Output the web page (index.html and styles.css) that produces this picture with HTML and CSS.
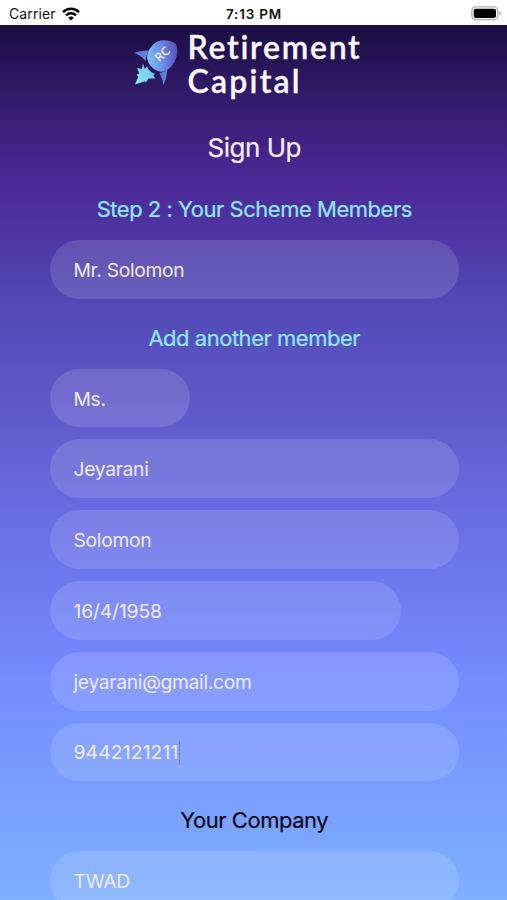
FILE: index.html
```html
<!DOCTYPE html>
<html lang="en">
<head>
<meta charset="utf-8">
<title>Retirement Capital - Sign Up</title>
<link rel="stylesheet" href="styles.css">
</head>
<body>
<div class="phone">
  <header class="status">
    <div class="carrier"><span>Carrier</span>
      <svg class="wifi" width="18" height="14" viewBox="0 0 18 14" fill="none" stroke="#000" stroke-width="2.4"><path d="M1 5.1C5.4.6 12.6.6 17 5.1"/><path d="M4 8.3c2.8-2.8 7.2-2.8 10 0"/><path d="M9 13.6 6.1 10.7c1.6-1.5 4.2-1.5 5.8 0z" fill="#000" stroke="none"/></svg>
    </div>
    <span class="time">7:13 PM</span>
    <svg class="battery" width="31" height="15" viewBox="0 0 31 15"><rect x=".8" y=".8" width="26" height="12.9" rx="4" fill="#fff" stroke="#b0b0b0" stroke-width="1.3"/><rect x="2.7" y="2.7" width="22.3" height="9.2" rx="2.2"/><path d="M28.4 5c2.4.8 2.4 3.7 0 4.5z" fill="#aaa"/></svg>
  </header>
  <main class="page">
    <div class="logo">
      <svg class="rocket" width="50" height="50" viewBox="0 0 50 50">
        <defs>
          <linearGradient id="hull" x1="0" y1="0.6" x2="1" y2="0.4"><stop offset="0" stop-color="#7cc4f4"/><stop offset=".45" stop-color="#6b8fe8"/><stop offset="1" stop-color="#5952bd"/></linearGradient>
          <linearGradient id="fin" x1="0" y1="0" x2="1" y2="1"><stop offset="0" stop-color="#5078cc"/><stop offset="1" stop-color="#6d8ce6"/></linearGradient>
          <linearGradient id="flame" x1="1" y1="0" x2="0" y2="1"><stop offset="0" stop-color="#70b9ec"/><stop offset="1" stop-color="#83f2f2"/></linearGradient>
        </defs>
        <path d="M1.500 12Q9 9 17 9.500C15 12.500 14 16 13.800 20Q9 14 1.500 12z" fill="url(#fin)"/>
        <path d="M27.400 32Q32 31.200 35.500 28.500Q34.800 37 31.500 44Q30.500 37 27.400 32z" fill="url(#fin)"/>
        <path d="M15 16.500C15.500 8 21.500 .8 29-.6c5-.6 10.500 .4 14.500 3.200C46.300 7 45.500 15 42.500 21c-3.500 6-7.800 9-13.500 9.800C22 30 16.500 24.500 15 16.500z" fill="url(#hull)"/>
        <path d="M11 22.300 9.800 28.200 5 26.800 7.300 32.600 4.600 33.600 6.200 36 3 43.500 13 40.200 13.800 41.800 16.500 37.600 23.500 37.600 21.200 34.800 23 33C19 31.500 16.500 29 15 25.500L12.600 28z" fill="url(#flame)"/>
        <text class="initials" transform="translate(27.600 21.400) rotate(-43)">RC</text>
      </svg>
      <div class="brand"><span class="brand-top">Retirement</span><span class="brand-bottom">Capital</span></div>
    </div>
    <h1>Sign Up</h1>
    <h2 class="step">Step 2 : Your Scheme Members</h2>
    <div class="field">Mr. Solomon</div>
    <h2 class="add">Add another member</h2>
    <form class="fields">
      <div class="field short">Ms.</div>
      <div class="field">Jeyarani</div>
      <div class="field">Solomon</div>
      <div class="field date">16/4/1958</div>
      <div class="field email">jeyarani@gmail.com</div>
      <div class="field phone-number">9442121211<i class="caret"></i></div>
    </form>
    <h2 class="company">Your Company</h2>
    <div class="field">TWAD</div>
  </main>
</div>
</body>
</html>
```
FILE: styles.css
```css
* { box-sizing: border-box; }
body { margin: 0; font-family: Inter, "Liberation Sans", sans-serif; overflow: hidden; }
.phone { width: 507px; height: 900px; overflow: hidden; display: flex; flex-direction: column; }
.status { height: 25px; flex: none; background: #fff; display: grid; grid-template-columns: 1fr auto 1fr; align-items: center; padding: 2px 5px 0 9px; color: #111; font-size: 14px; }
.carrier { display: flex; align-items: center; gap: 6px; letter-spacing: .1px; }
.time { font-weight: 600; font-size: 13.5px; letter-spacing: .8px; margin-right: 3px; }
.battery { justify-self: end; }
.page { flex: 1; min-height: 0; padding: 0 48px 0 49.5px; background: linear-gradient(#190e42 0, #3b1f78 95px, #4c2896 155px, #5148b4 275px, #5f58c8 375px, #6c76ec 540px, #738bff 650px, #7fb0ff 875px); }
.logo { display: flex; height: 83px; padding: 16px 0 0 82px; }
.rocket { flex: none; margin-right: 6px; overflow: visible; }
.initials { font: 700 12px Lato, sans-serif; fill: #e6e5ff; }
.brand { display: flex; flex-direction: column; margin-top: -11px; color: #fdf8ff; font: 600 32px/34px Lato, sans-serif; -webkit-text-stroke: .3px currentColor; }
.brand-top { letter-spacing: 1.7px; }
.brand-bottom { letter-spacing: 2.2px; }
h1, h2 { margin: 0; text-align: center; font-weight: 400; white-space: nowrap; -webkit-text-stroke: .2px currentColor; }
h1 { height: 80px; line-height: 79px; font-size: 26px; letter-spacing: -.5px; color: #fbeeff; }
h2 { font-size: 22px; letter-spacing: -.48px; color: #8deafc; }
.step { height: 52.5px; line-height: 43px; margin-top: -0.5px; }
.field { height: 58.5px; border-radius: 30px; background: rgba(255,255,255,.13); padding-left: 24px; line-height: 61px; font-size: 19.3px; letter-spacing: -.32px; color: #f0eaff; white-space: nowrap; }
.add { height: 70px; line-height: 79px; }
.fields { display: flex; flex-direction: column; gap: 12.4px; margin: 0; }
.short { width: 140.5px; }
.date { width: 351.5px; letter-spacing: -.15px; }
.company { height: 70px; line-height: 79px; color: #080a18; }
.phone-number { display: flex; align-items: center; padding-top: 1px; letter-spacing: .15px; }
.caret { width: 1px; height: 24px; background: #6386e8; }
```
